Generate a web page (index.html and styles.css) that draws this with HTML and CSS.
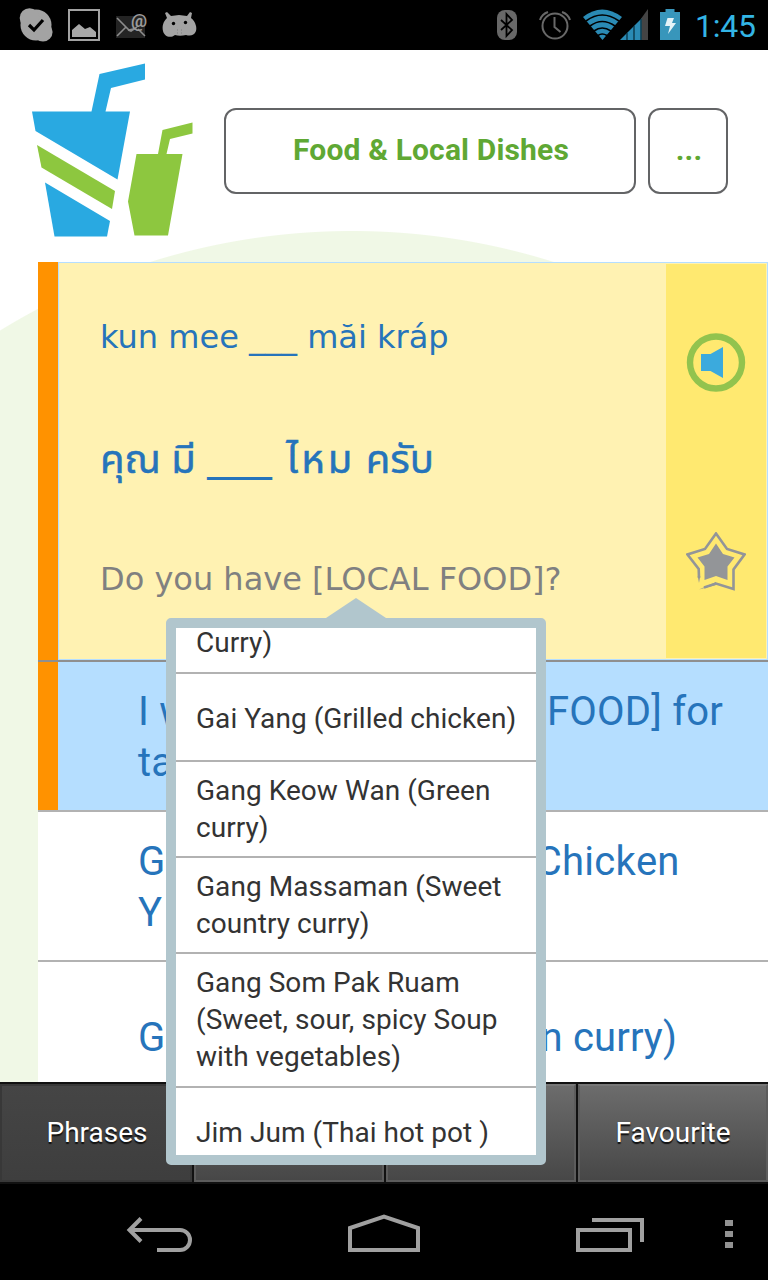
FILE: index.html
```html
<!DOCTYPE html>
<html lang="en">
	<head>
		<meta charset="utf-8">
		<title>Food &amp; Local Dishes</title>
		<link rel="stylesheet" href="styles.css">
	</head>
	<body>
		<div class="statusbar">
			<svg width="220" height="50" viewBox="0 0 220 50">
				<!-- skype -->
				<g fill="#a3a3a3">
					<circle cx="36" cy="25" r="15.500"/>
					<circle cx="29.500" cy="18" r="9.800"/>
					<circle cx="43" cy="32" r="9.600"/>
				</g>
				<path d="M29 25l5 5 9-10" fill="none" stroke="#000" stroke-width="3.200"/>
				<!-- gallery -->
				<rect x="69" y="10" width="30" height="30" fill="none" stroke="#a3a3a3" stroke-width="2"/>
				<path d="M72 37v-7l7-6 6 5 5-2 6 5v5z" fill="#a8a8a8"/>
				<!-- mail -->
				<rect x="116" y="16" width="29" height="22" fill="#242424"/>
				<path d="M117 18l12 12 4-1M117 36l9-9M138 29l7 7M128 30l3 1 6-4" fill="none" stroke="#8c8c8c" stroke-width="1.600"/>
				<text x="131" y="26.500" class="at">@</text>
				<!-- android -->
				<path d="M167 18l-2-5 2-1 4 4 8-1 8 1 3-4 2 1-1 5c5 4 6 10 5 13-2 5-6 5-10 4-4 1-8 1-11 0-5 4-11 1-12-4-1-5 0-9 4-13z" fill="#a3a3a3"/>
				<circle cx="173.500" cy="23.500" r="1.700"/>
				<circle cx="185.500" cy="22.500" r="1.700"/>
				<path d="M177 30h.8M181 30h.8M177 33h.8M181 33h.8" stroke="#777"/>
			</svg>
			<svg width="210" height="50" viewBox="490 0 210 50">
				<!-- bluetooth -->
				<rect x="497" y="10" width="20" height="30" rx="8" fill="#686868"/>
				<path d="M501 20l11 10-5.500 6V14l5.500 6-11 10" fill="none" stroke="#000" stroke-width="1.800"/>
				<!-- alarm -->
				<g fill="none" stroke="#686868" stroke-width="2">
					<circle cx="555" cy="26" r="12.500"/>
					<path d="M554.500 17v10l6 5"/>
					<path d="M540 20q2-6 8-8M562 12q6 2 8 8"/>
				</g>
				<!-- wifi -->
				<path d="M583 17q19-15 39 0l-19.500 23z" fill="#2a8ab4"/>
				<path d="M586 21q16-12 33 0M590 26q12-9 25 0M594 31q8-6 17 0M598 35.500q4-3 9 0" fill="none" stroke="#000" stroke-width="1.600"/>
				<!-- signal -->
				<path d="M620 40l22-22v22z" fill="#2a8ab4"/>
				<path d="M641.500 18l6.500-9v31h-6.500z" fill="#444"/>
				<path d="M627 33v7M634 26v14M641 19v21" stroke="#062a38" stroke-width="1.200"/>
				<!-- battery -->
				<path d="M660 12h5.500v-3h9v3h5.500v28h-20z" fill="#3896bb"/>
				<path d="M667.500 18h6.500l-2 5h4l-8 11 2-8h-5z" fill="#e4f3f8"/>
			</svg>
			<span class="clock">1:45</span>
		</div>

		<div class="app">
			<div class="header">
				<svg class="logo" width="162" height="176" viewBox="31 62 162 176">
					<g fill="#29a9e1">
						<path d="M32 111.500h59.500L99.500 74 145 63.500v16L111 88l-5.500 23.500H130l-12.500 68L35.500 131z"/>
						<path d="M45 182.500l65 38.500-3 15.500H54.500z"/>
					</g>
					<g fill="#8dc73f">
						<path d="M37 145l78 46-3 18-70.500-41.500z"/>
						<path d="M136.500 154h21.500l4.500-24 30-7.500v11L170 139l-3.500 15h16L168 235.500h-33.500l-6.500-34z"/>
					</g>
				</svg>
				<div class="btn category">Food &amp; Local Dishes</div>
				<div class="btn more">...</div>
			</div>

			<div class="list">
				<div class="phrase">
					<div class="card">
						<div class="words">
							<div class="roman">kun mee ___ măi kráp</div>
							<div class="thai" lang="th">คุณ มี <span class="blank">___</span> <span class="wide">ไหม</span> ครับ</div>
							<div class="english">Do you have [LOCAL FOOD]?</div>
						</div>
						<div class="tools">
							<svg width="60" height="60" viewBox="0 0 60 60">
								<circle cx="30" cy="29.500" r="26" fill="none" stroke="#92c34e" stroke-width="6.400"/>
								<path d="M15 21h9.500l12.500-7v31l-12.500-7H15z" fill="#3baadd"/>
							</svg>
							<svg width="60" height="60" viewBox="0 0 60 60">
								<path d="M13 46l-.3-9L1.500 22.500l17.500-5.500L30 1.500l11 15.500L58.500 22.500 47.500 37.500V57L30 51.500 18 55.500" fill="none" stroke="#939598" stroke-width="2.600"/>
								<path d="M11.700 44h2.600l-1.300 7zM13 57.500L30 50v3z" fill="#939598"/>
								<path d="M30 11.500l7 10.500 11.500 3.500-7 9V48L30 44l-11.500 4V34.500l-7-9L23 22z" fill="#939598"/>
							</svg>
						</div>
					</div>
				</div>
				<div class="row active"><p><span class="food">I would like [LOCAL</span> FOOD] for<br>take away</p></div>
				<div class="row"><p><span class="dish">Grilled Marinated</span> Chicken<br><span class="wide">Yang</span></p></div>
				<div class="row"><p>Gang Keow Wan (Green curry)</p></div>
			</div>
		</div>

		<div class="tabs">
			<div class="tab selected">Phrases</div>
			<div class="tab"></div>
			<div class="tab"></div>
			<div class="tab">Favourite</div>
		</div>

		<div class="navbar">
			<svg width="768" height="96" viewBox="0 1184 768 96">
				<g fill="none" stroke="#a0a0a0" stroke-width="4">
					<path d="M129 1230h51a10 10 0 0 1 0 20h-23"/>
					<path d="M141 1218.500l-11.500 11.500 11.500 11.500"/>
					<path d="M350 1250v-22l34-11.500 34 11.500v22z"/>
					<path d="M578 1230h52v20h-52zM592 1220h50v22"/>
				</g>
				<path d="M725 1220h8v6h-8zM725 1231h8v6h-8zM725 1242h8v6h-8z" fill="#929292"/>
			</svg>
		</div>

		<div class="popup">
			<div class="scroller">
				<div class="item first">Curry)</div>
				<div class="item single">Gai Yang (Grilled chicken)</div>
				<div class="item">Gang Keow Wan (Green<br>curry)</div>
				<div class="item">Gang Massaman (Sweet<br>country curry)</div>
				<div class="item tall">Gang Som Pak Ruam<br>(Sweet, sour, spicy Soup<br>with vegetables)</div>
				<div class="item single">Jim Jum (Thai hot pot )</div>
			</div>
		</div>
	</body>
</html>
```
FILE: styles.css
```css
*{
	box-sizing:border-box;
}
body{
	margin:0;
	width:768px;
	height:1280px;
	position:relative;
	display:flex;
	flex-direction:column;
	overflow:hidden;
	background:#000;
	font-family:Roboto, "Noto Sans", sans-serif;
}
svg{
	display:block;
	flex:none;
}
.statusbar{
	height:50px;
	display:flex;
	align-items:center;
	background:#000;
}
.statusbar svg + svg{
	margin-left:270px;
}
.at{
	font:bold 18px Roboto, sans-serif;
	fill:#9a9a9a;
}
.clock{
	margin:2px 0 0 -5px;
	color:#33b5e5;
	font-size:32px;
	letter-spacing:-.2px;
	white-space:nowrap;
}
.app{
	height:1032px;
	overflow:hidden;
	background:radial-gradient(circle at 352px 853px, #f0f8e6 671.500px, #fff 672.500px);
}
.header{
	height:212px;
	display:flex;
	align-items:flex-start;
	padding:12px 40px 0 31px;
}
.btn{
	height:86px;
	margin-top:46px;
	padding-left:2px;
	border:2px solid #636466;
	border-radius:12px;
	background:#fff;
	color:#5fa834;
	font-size:30px;
	font-weight:bold;
	line-height:80px;
	letter-spacing:.15px;
	text-align:center;
}
.category{
	width:412px;
	margin-left:31px;
}
.more{
	width:80px;
	margin-left:12px;
}
.list{
	margin-left:38px;
	background:#fff;
}
.phrase{
	height:400px;
	padding-left:20px;
	border-bottom:2px solid #8f8f8f;
	background:#ff9200;
}
.card{
	height:398px;
	display:flex;
	background:#fff2b2;
	box-shadow:inset 0 0 0 1px #b5deff;
}
.words{
	width:608px;
	padding:51px 0 0 42px;
	color:#2674bb;
	font-family:"DejaVu Sans", sans-serif;
	font-size:32px;
	white-space:nowrap;
}
.roman{
	height:121px;
	line-height:48px;
}
.thai{
	height:121px;
	font-family:"Noto Sans Thai", Roboto, "DejaVu Sans", sans-serif;
	font-size:40px;
	line-height:54px;
	-webkit-text-stroke:.5px #2674bb;
}
.blank{
	margin:0 4px 0 1px;
	font-family:"DejaVu Sans", sans-serif;
	font-size:43px;
	line-height:1;
	vertical-align:3px;
	-webkit-text-stroke:0;
}
.wide{
	letter-spacing:3px;
}
.english{
	color:#808080;
	line-height:48px;
}
.tools{
	width:100px;
	margin:2px 0;
	padding:69px 0 0 20px;
	display:flex;
	flex-direction:column;
	gap:139px;
	background:#ffe970;
}
.row{
	height:150px;
	display:flex;
	align-items:center;
	padding:2px 0 0 100px;
	border-bottom:2px solid #b2b2b2;
	color:#2674bb;
	font-size:40px;
	line-height:51px;
	letter-spacing:.2px;
	font-kerning:none;
	white-space:nowrap;
}
.row p{
	margin:0;
}
.row .wide{
	letter-spacing:4px;
}
.active{
	background:linear-gradient(90deg, #ff9200 20px, #b5deff 20px);
}
.food{
	padding-right:53px;
}
.dish{
	padding-right:80px;
}
.tabs{
	height:102px;
	display:grid;
	grid-template-columns:repeat(4, 1fr);
	border-top:2px solid #111;
	border-bottom:2px solid #111;
	background:#111;
}
.tab{
	margin-left:2px;
	border:2px solid #5c5c5c;
	border-top-color:#777;
	background:linear-gradient(#6c6c6c, #474747);
	color:#fff;
	font-size:28px;
	line-height:94px;
	text-align:center;
	text-shadow:0 2px 1px #111;
}
.selected{
	margin-left:0;
	padding-left:2px;
	border-color:#383838;
	background:linear-gradient(#454545, #3e3e3e);
}
.navbar{
	height:96px;
	background:#000;
}
.popup{
	position:absolute;
	left:166px;
	top:618px;
	width:380px;
	height:547px;
	border:10px solid #b1c6cd;
	border-radius:5px;
}
.popup::before{
	content:"";
	position:absolute;
	left:150px;
	top:-30px;
	border:solid transparent;
	border-width:0 30px 20px;
	border-bottom-color:#b1c6cd;
}
.scroller{
	height:100%;
	overflow:hidden;
	background:#fff;
}
.item{
	min-height:88px;
	display:flex;
	align-items:center;
	padding:10px 0 10px 20px;
	border-bottom:2px solid #b2b2b2;
	color:#333;
	font-size:28px;
	line-height:37px;
	letter-spacing:.05px;
	white-space:nowrap;
}
.single{
	padding-top:13px;
}
.tall{
	padding-bottom:11px;
}
.first{
	height:46px;
	min-height:0;
	padding:0 0 11px 20px;
	align-items:flex-end;
}
```
